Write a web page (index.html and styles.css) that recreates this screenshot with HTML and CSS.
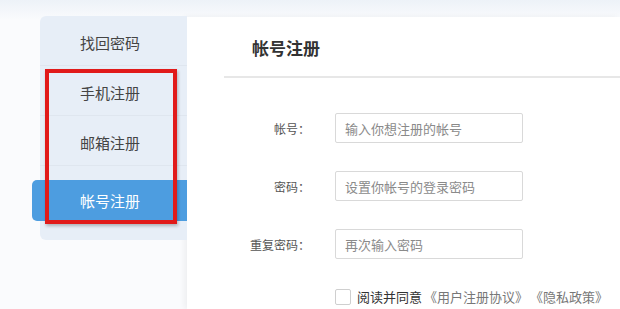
FILE: index.html
```html
<!DOCTYPE html>
<html lang="zh-CN">
<head>
  <meta charset="UTF-8">
  <title>帐号注册</title>
  <link rel="stylesheet" href="styles.css">
</head>
<body>
  <div class="page">
    <aside class="side">
      <nav class="side-menu">
        <a href="#" class="menu-item">找回密码</a>
        <a href="#" class="menu-item">手机注册</a>
        <a href="#" class="menu-item">邮箱注册</a>
        <a href="#" class="menu-item active">帐号注册</a>
      </nav>
      <div class="mark"></div>
    </aside>

    <main class="panel">
      <h2 class="panel-title">帐号注册</h2>
      <form class="reg-form">
        <div class="row">
          <label class="label">帐号：</label>
          <input class="field" type="text" placeholder="输入你想注册的帐号">
        </div>
        <div class="row">
          <label class="label">密码：</label>
          <input class="field" type="password" placeholder="设置你帐号的登录密码">
        </div>
        <div class="row">
          <label class="label">重复密码：</label>
          <input class="field" type="password" placeholder="再次输入密码">
        </div>
        <div class="agree">
          <span class="check"></span>
          <span class="agree-text">阅读并同意</span>
          <a href="#" class="doc">《用户注册协议》</a>
          <a href="#" class="doc">《隐私政策》</a>
        </div>
      </form>
    </main>
  </div>
</body>
</html>
```

FILE: styles.css
```css
body {
  margin: 0;
  padding: 0;
  font-family: "Noto Sans CJK SC", "Liberation Sans", sans-serif;
  background: #fafbfd;
  overflow: hidden;
}

.page {
  display: flex;
  height: 309px;
  background: linear-gradient(#edf2f8, #fafbfd 20px);
}

/* left menu */
.side {
  position: relative;
  width: 147px;
  padding: 16px 0 0 40px;
  flex-shrink: 0;
}
.side-menu {
  display: flex;
  flex-direction: column;
  height: 224px;
  background: #e7eef7;
  border-radius: 6px 0 0 6px;
  box-sizing: border-box;
}
.menu-item {
  display: block;
  height: 50px;
  line-height: 54px;
  padding-left: 40px;
  font-size: 15px;
  color: #444;
  text-decoration: none;
  border-bottom: 1px solid #dfe6ef;
  box-sizing: border-box;
}
.menu-item:nth-child(3) {
  margin-bottom: 14px;
}
.menu-item.active {
  height: 41px;
  line-height: 41px;
  margin-left: -8px;
  padding-left: 48px;
  background: #4d9de0;
  color: #fff;
  border: none;
  border-radius: 5px 0 0 5px;
}

/* red annotation box */
.mark {
  position: absolute;
  left: 45px;
  top: 69px;
  width: 132px;
  height: 155px;
  border: 4px solid #e11a1a;
  box-sizing: border-box;
  box-shadow: 1px 2px 3px rgba(0, 0, 0, 0.25);
}

/* right panel */
.panel {
  flex: 1;
  margin-top: 17px;
  background: #fff;
  box-shadow: -3px 0 6px rgba(0, 0, 0, 0.05);
}
.panel-title {
  margin: 0 0 0 37px;
  padding: 18px 0 0 28px;
  height: 41px;
  font-size: 17px;
  font-weight: bold;
  color: #333;
  border-bottom: 2px solid #e7e7e7;
}

.reg-form {
  padding: 35px 0 0 43px;
}
.row {
  display: flex;
  align-items: center;
  margin-bottom: 28px;
}
.label {
  width: 80px;
  margin-right: 25px;
  text-align: right;
  font-size: 12px;
  color: #555;
}
.field {
  width: 188px;
  height: 30px;
  padding: 0 9px;
  border: 1px solid #d9d9d9;
  border-radius: 2px;
  box-sizing: border-box;
  font-family: inherit;
  font-size: 13px;
  color: #333;
  outline: none;
}
.field::placeholder {
  color: #8a8a8a;
}

.agree {
  display: flex;
  align-items: center;
  margin: 2px 0 0 105px;
  font-size: 13px;
}
.check {
  width: 14px;
  height: 14px;
  border: 1px solid #cfcfcf;
  border-radius: 2px;
  margin-right: 6px;
}
.agree-text {
  color: #333;
}
.doc {
  margin-left: 2px;
  color: #777;
  text-decoration: none;
}
```
